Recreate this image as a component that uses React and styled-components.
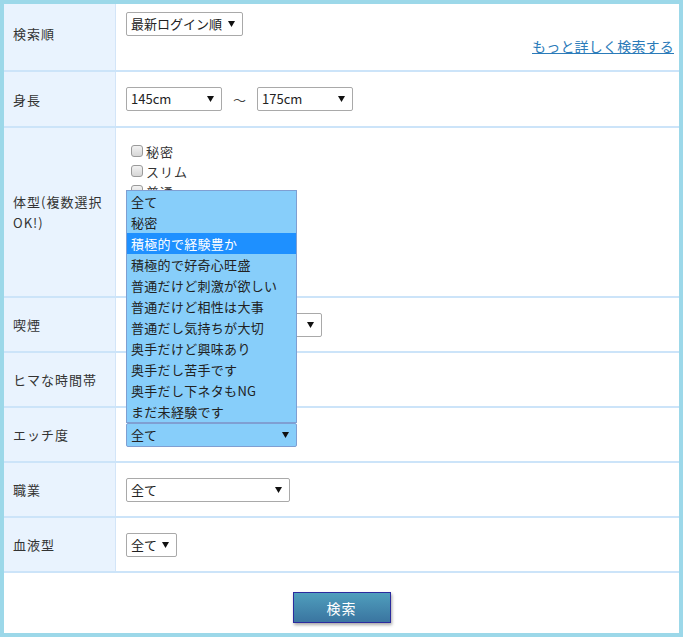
import React from "react";
import styled, { createGlobalStyle } from "styled-components";

const GlobalStyle = createGlobalStyle`
  * { box-sizing: border-box; }
  body {
    margin: 0;
    background: #fff;
    font-family: "Noto Sans CJK JP", "Noto Sans", sans-serif;
    color: #333;
  }
`;

const Frame = styled.div`
  width: 683px;
  height: 637px;
  border: 4px solid #9cd8e9;
  background: #fff;
`;

const Row = styled.div`
  display: grid;
  grid-template-columns: 112px 1fr;
  height: ${(p) => p.$h}px;
  border-bottom: 2px solid #cce4f9;
`;

const Label = styled.div`
  display: flex;
  align-items: center;
  background: #e9f3fe;
  border-right: 1px solid #d3e5f8;
  padding: 0 6px ${(p) => p.$pb || 0}px 9px;
  font-size: 13px;
  letter-spacing: 1px;
  line-height: 21px;
  color: #333;
`;

const Cell = styled.div`
  display: flex;
  flex-direction: ${(p) => (p.$column ? "column" : "row")};
  align-items: ${(p) => (p.$column ? "flex-start" : "center")};
  padding: ${(p) => p.$pad || "0 5px 0 10px"};
  gap: ${(p) => p.$gap || 0}px;
`;

const SelectWrap = styled.div`
  position: relative;
  display: inline-flex;
  align-items: center;
  justify-content: space-between;
  width: ${(p) => p.$w}px;
  height: 24px;
  flex: none;
  border: 1px solid ${(p) => (p.$open ? "#7f9fd2" : "#a9a9a9")};
  border-radius: 2px;
  background: ${(p) => (p.$open ? "#87cefa" : "#fff")};
  padding: 0 7px 0 4px;
  font-size: 13px;
  line-height: 22px;
  color: #222;
`;

const Popup = styled.ul`
  position: absolute;
  left: -1px;
  bottom: calc(100% + 1px);
  width: calc(100% + 2px);
  margin: 0;
  padding: 0;
  list-style: none;
  background: #87cefa;
  border: 1px solid #7f9fd2;
  z-index: 10;
`;

const Option = styled.li`
  height: 21px;
  line-height: 21px;
  padding-left: 4px;
  font-size: 13px;
  letter-spacing: 0.3px;
  white-space: nowrap;
  background: ${(p) => (p.$active ? "#1e90ff" : "transparent")};
  color: ${(p) => (p.$active ? "#fff" : "#222")};
`;

const Tilde = styled.span`
  font-size: 13px;
  color: #444;
`;

const MoreLink = styled.a`
  align-self: stretch;
  text-align: right;
  font-size: 14px;
  line-height: 20px;
  letter-spacing: 0.2px;
  color: #2b7bb9;
  text-decoration: underline;
`;

const CheckItem = styled.label`
  display: flex;
  align-items: center;
  height: 20px;
  font-size: 13px;
  letter-spacing: 1px;
  color: #333;
`;

const CheckBox = styled.span`
  width: 12px;
  height: 12px;
  margin: 0 3px 0 5px;
  border: 1px solid #9a9a9a;
  border-radius: 3px;
  background: linear-gradient(#f2f2f2, #d6d6d6);
`;

const ButtonArea = styled.div`
  display: flex;
  justify-content: center;
  padding-top: 19px;
`;

const SubmitButton = styled.button`
  width: 98px;
  height: 31px;
  border: 1px solid #2b2b9e;
  background: linear-gradient(#4f9ebd, #3a75a0);
  color: #fff;
  font-family: inherit;
  font-size: 14px;
  letter-spacing: 1px;
  box-shadow: 1px 2px 3px rgba(0, 0, 0, 0.35);
  cursor: pointer;
`;

function Arrow() {
  return (
    <svg width="7" height="6" viewBox="0 0 7 6">
      <path d="M0 0 H7 L3.5 6 Z" fill="#111" />
    </svg>
  );
}

function Select({ w, value, open, options, active }) {
  return (
    <SelectWrap $w={w} $open={open}>
      <span>{value}</span>
      <Arrow />
      {open && (
        <Popup>
          {options.map((o, i) => (
            <Option key={o} $active={i === active}>
              {o}
            </Option>
          ))}
        </Popup>
      )}
    </SelectWrap>
  );
}

const bodyTypes = ["秘密", "スリム", "普通", "筋肉質", "ややぽっちゃり", "ぽっちゃり", "太め"];

const ecchiOptions = [
  "全て",
  "秘密",
  "積極的で経験豊か",
  "積極的で好奇心旺盛",
  "普通だけど刺激が欲しい",
  "普通だけど相性は大事",
  "普通だし気持ちが大切",
  "奥手だけど興味あり",
  "奥手だし苦手です",
  "奥手だし下ネタもNG",
  "まだ未経験です",
];

export default function App() {
  return (
    <>
      <GlobalStyle />
      <Frame>
        <Row $h={68}>
          <Label $pb={8}>検索順</Label>
          <Cell $column $pad="8px 5px 0 10px">
            <Select w={117} value="最新ログイン順" />
            <MoreLink href="#">もっと詳しく検索する</MoreLink>
          </Cell>
        </Row>
        <Row $h={56}>
          <Label>身長</Label>
          <Cell $gap={11}>
            <Select w={96} value="145cm" />
            <Tilde>～</Tilde>
            <Select w={96} value="175cm" />
          </Cell>
        </Row>
        <Row $h={170}>
          <Label>体型(複数選択OK!)</Label>
          <Cell $column $pad="13px 5px 0 10px">
            {bodyTypes.map((t) => (
              <CheckItem key={t}>
                <CheckBox />
                {t}
              </CheckItem>
            ))}
          </Cell>
        </Row>
        <Row $h={55}>
          <Label>喫煙</Label>
          <Cell>
            <Select w={196} value="全て" />
          </Cell>
        </Row>
        <Row $h={55}>
          <Label>ヒマな時間帯</Label>
          <Cell>
            <Select w={120} value="全て" />
          </Cell>
        </Row>
        <Row $h={55}>
          <Label>エッチ度</Label>
          <Cell>
            <Select w={171} value="全て" open options={ecchiOptions} active={2} />
          </Cell>
        </Row>
        <Row $h={55}>
          <Label>職業</Label>
          <Cell>
            <Select w={164} value="全て" />
          </Cell>
        </Row>
        <Row $h={55}>
          <Label>血液型</Label>
          <Cell>
            <Select w={51} value="全て" />
          </Cell>
        </Row>
        <ButtonArea>
          <SubmitButton>検索</SubmitButton>
        </ButtonArea>
      </Frame>
    </>
  );
}
